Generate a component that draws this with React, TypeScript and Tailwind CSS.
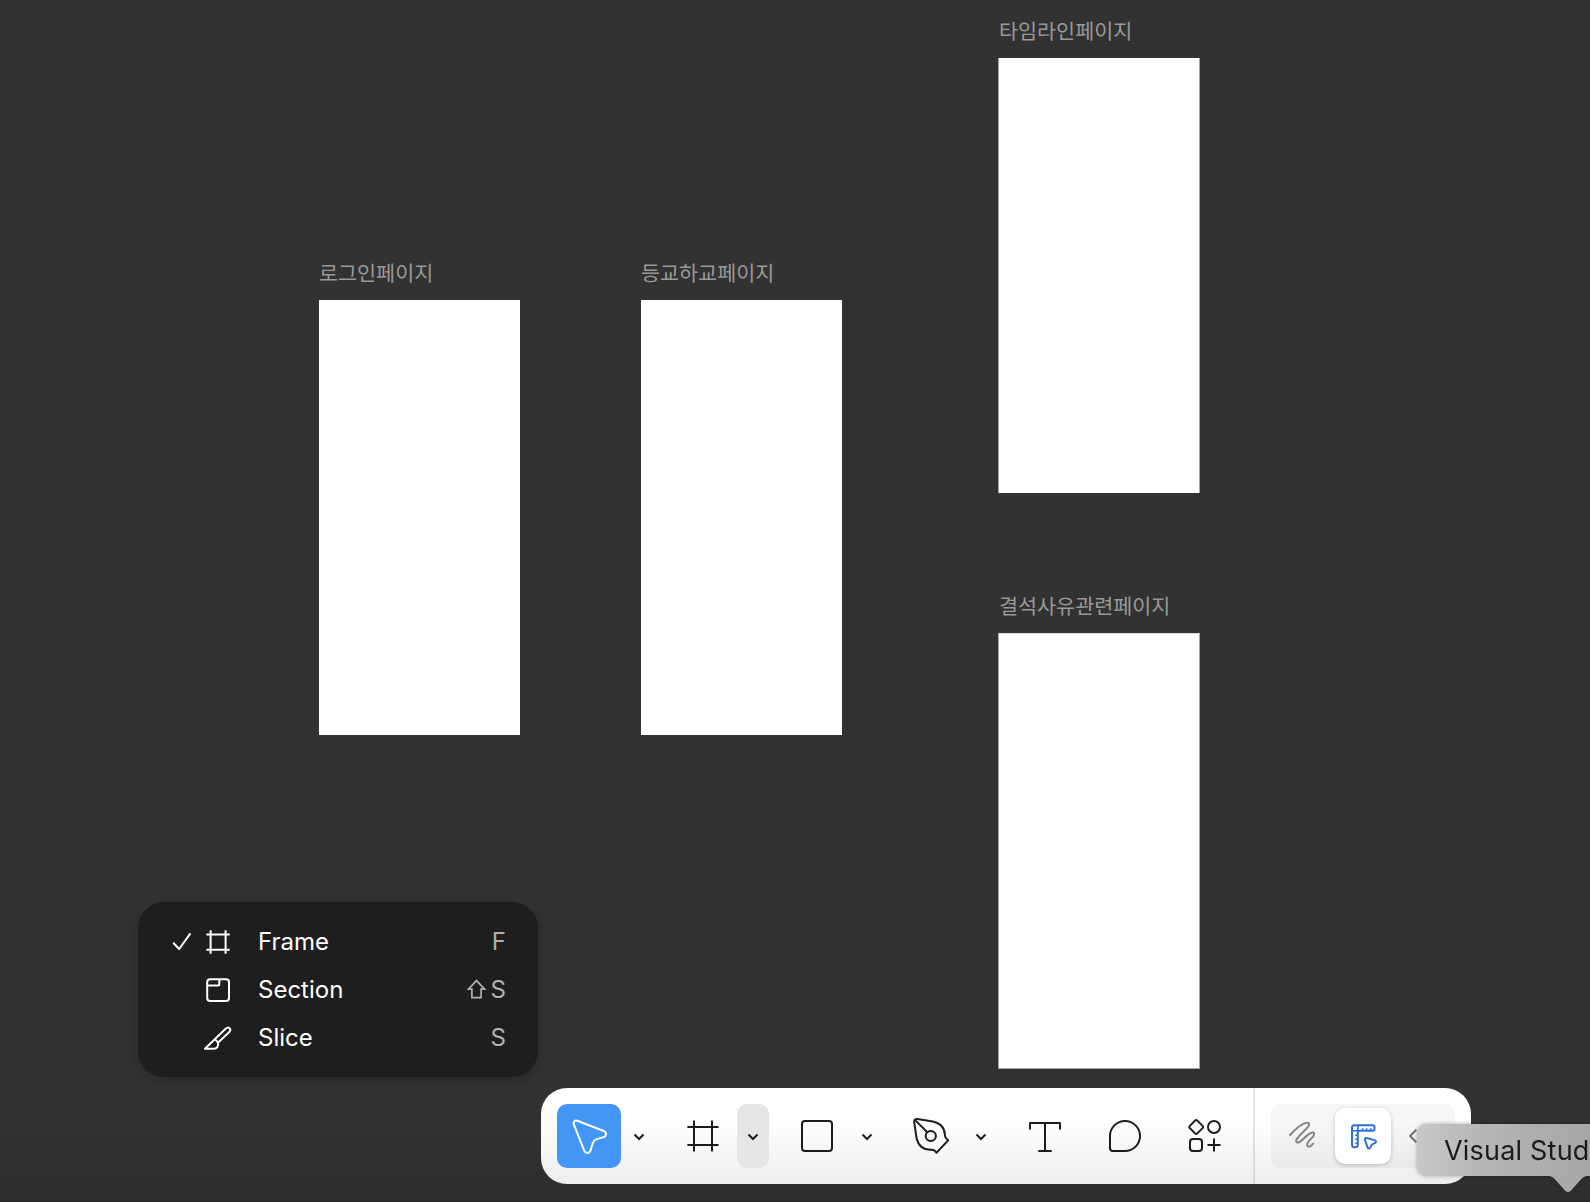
import type { ReactNode } from "react";

const frames = [
  { label: "로그인페이지", place: "left-[319px] top-[258px] w-[201px]", edge: "h-[435px]", inset: "" },
  { label: "등교하교페이지", place: "left-[641px] top-[258px] w-[201px]", edge: "h-[435px]", inset: "" },
  { label: "타임라인페이지", place: "left-[998px] top-[16px] w-[202px]", edge: "h-[435px] border-x border-[#a3a3a3]", inset: "pl-px" },
  { label: "결석사유관련페이지", place: "left-[998px] top-[591px] w-[202px]", edge: "h-[436px] border border-[#a3a3a3] border-t-[#d8d8d8]", inset: "pl-px" },
];

function CanvasFrame({ label, place, edge, inset }: { label: string; place: string; edge: string; inset: string }) {
  return (
    <section className={`absolute flex flex-col ${place}`}>
      <h2
        className={`h-[42px] whitespace-nowrap font-['Noto_Sans_CJK_KR',sans-serif] text-[20.7px] leading-[28px] text-[#999999] ${inset}`}
      >
        {label}
      </h2>
      <div className={`bg-white ${edge}`} />
    </section>
  );
}

function Glyph({ size, className, children }: { size: number; className?: string; children: ReactNode }) {
  return (
    <svg
      width={size}
      height={size}
      viewBox={`0 0 ${size} ${size}`}
      fill="none"
      stroke="currentColor"
      strokeWidth="2"
      strokeLinejoin="round"
      className={`shrink-0 ${className ?? ""}`}
    >
      {children}
    </svg>
  );
}

function Chevron({ active }: { active?: boolean }) {
  return (
    <button className={`ml-0.5 flex h-16 w-8 items-center justify-center rounded-[10px] ${active ? "bg-[#e5e5e5]" : ""}`}>
      <svg width="12" height="8" viewBox="0 0 12 8" fill="none" stroke="#1c1c1c" strokeWidth="2" className="mt-0.5">
        <path d="M1.5 1.5 6 6l4.5-4.5" />
      </svg>
    </button>
  );
}

function MenuRow({ checked, icon, name, keys }: { checked?: boolean; icon: ReactNode; name: string; keys: ReactNode }) {
  return (
    <li className="flex h-12 items-center pl-8 pr-8">
      <span className="w-8">
        {checked && (
          <Glyph size={24}>
            <path d="M3.2 12.8l6 6.2L20.4 3.4" />
          </Glyph>
        )}
      </span>
      {icon}
      <span className="ml-6 grow">{name}</span>
      <span className="flex items-center gap-1 text-[#b0b0b0]">{keys}</span>
    </li>
  );
}

function FrameMenu() {
  return (
    <ul className="absolute left-[138px] top-[902px] w-[400px] rounded-[26px] bg-[#1e1e1e] pb-[15px] pt-4 text-[24px] text-white shadow-[0_4px_14px_rgba(0,0,0,0.2)]">
      <MenuRow
        checked
        name="Frame"
        keys="F"
        icon={
          <Glyph size={32}>
            <path d="M8.6 4.3v23.4M23.6 4.3v23.4M4.3 8.4h23.4M4.3 23.7h23.4" />
          </Glyph>
        }
      />
      <MenuRow
        name="Section"
        keys={
          <>
            <svg width="20" height="20" viewBox="0 0 20 20" fill="none" stroke="currentColor" strokeWidth="1.7" className="-mt-0.5">
              <path d="M9.5 1.6 1.4 10.2h3.5v8.4h9.2v-8.4h3.5Z" />
            </svg>
            S
          </>
        }
        icon={
          <Glyph size={32}>
            <rect x="5.2" y="5.2" width="21.8" height="21.8" rx="3" />
            <path d="M17.3 5.5v4.9a1 1 0 0 1-1 1H5.5" />
          </Glyph>
        }
      />
      <MenuRow
        name="Slice"
        keys="S"
        icon={
          <Glyph size={32}>
            <path d="M3 26.7h8.6c3.6 0 5-2.7 4.4-6L27 10.2c1.5-1.5 1.6-3 .6-4-1-1-2.5-.8-4 .6L3 26.700Z" />
            <path d="M12.6 17.4c1.4.6 2.500 1.700 3.400 3.300" />
          </Glyph>
        }
      />
    </ul>
  );
}

function Toolbar() {
  return (
    <nav className="absolute left-[541px] top-[1088px] flex h-24 overflow-hidden rounded-[26px] bg-linear-to-b from-white from-35% to-[#ededed] text-[#1c1c1c]">
      <div className="flex gap-4 p-4">
        <div className="flex">
          <button className="rounded-[10px] bg-[#4396f3] text-white">
            <Glyph size={64}>
              <path d="M20.3 16.8 46.7 27c3.2 1.3 3 5.3-.1 6.1l-6.8 2c-2.2.6-3.2 1.5-3.9 3.6l-2.4 7.7c-1 3.3-5 3.2-6.2.4L16.8 20.3c-.9-2.3 1.2-4.4 3.5-3.5Z" />
            </Glyph>
          </button>
          <Chevron />
        </div>
        <div className="flex">
          <Glyph size={64}>
            <path d="M23 16.4v31.2M41 16.4v31.2M16.4 23h31.2M16.4 41h31.2" />
          </Glyph>
          <Chevron active />
        </div>
        <div className="flex">
          <Glyph size={64}>
            <rect x="17" y="17" width="30" height="30" rx="3" />
          </Glyph>
          <Chevron />
        </div>
        <div className="flex">
          <Glyph size={64}>
            <path d="M15.2 18.4c-.3-2.2 1.1-3.6 3.3-3.4l15.3 2.4c7 1.2 11.8 6.2 12 12.9.1 2.2.4 3.1 1.2 3.8l2.2 2.3-11.8 12.3-2-2.3c-.8-.7-1.8-.7-3.4-.7-7.9.2-12.7-4.4-14.4-11.5Z" />
            <path d="m16.4 16.4 11.9 11.9" />
            <circle cx="31.8" cy="32" r="5.1" />
          </Glyph>
          <Chevron />
        </div>
        <Glyph size={64}>
          <path d="M17 25.5V19h30v6.5M32 19v28M25.3 47h13.4" />
        </Glyph>
        <Glyph size={64}>
          <path d="M32 17a15 15 0 0 1 0 30H20a3 3 0 0 1-3-3V32a15 15 0 0 1 15-15Z" />
        </Glyph>
        <Glyph size={64}>
          <path d="m22.3 16.4-5.7 5.7a1.3 1.3 0 0 0 0 1.8l5.7 5.7a1.3 1.3 0 0 0 1.8 0l5.7-5.7a1.3 1.3 0 0 0 0-1.8l-5.7-5.7a1.3 1.3 0 0 0-1.8 0Z" />
          <circle cx="41" cy="23" r="6" />
          <rect x="17" y="35" width="12" height="12" rx="3" />
          <path d="M41 34.5v13M34.5 41h13" />
        </Glyph>
      </div>
      <div className="w-0.5 bg-black/10" />
      <div className="p-4">
        <div className="flex h-16 gap-1 rounded-[10px] bg-black/[0.03] p-1">
          <Glyph size={56} className="text-[#858585]">
            <path
              strokeLinecap="round"
              d="M15 27C20 21.6 26.5 16 31.2 14.9c2.9-.6 3.8 1.4 2 3.7C30 22.7 23.2 28 21.5 31.5c-1.2 2.6.8 4 3.3 2.4 4-2.6 7.6-7.9 11.6-9.2 2.8-.9 3.6 1.2 1.9 3.4-2 2.7-5.2 5-6 7.7-.8 2.5 1.1 3.6 3.2 2.3 1.2-.7 2-1.6 2.7-2.4"
            />
          </Glyph>
          <div className="rounded-[10px] bg-white text-[#2f70d8] shadow-[0_1px_4px_rgba(0,0,0,0.22)]">
            <Glyph size={56}>
              <path d="M38 17.2H19.5a2.5 2.5 0 0 0-2.5 2.5v17a2.5 2.5 0 0 0 2.5 2.5h.8a2.5 2.5 0 0 0 2.5-2.5V22.8h14.7a2 2 0 0 0 2-2v-1.9a1.7 1.7 0 0 0-1.5-1.7Z" />
              <path strokeWidth="1.6" d="M22.8 17.2v5.6H17M27.6 22.8v-2.6M31.6 22.8v-2.6M35.6 22.8v-2.6M22.8 27.3h-2.6M22.8 31.3h-2.6M22.8 35.3h-2.6" />
              <path d="m31.6 30 7.900 2.100c1.900.5 2 2.400.4 3.100l-2.300 1c-.7.3-1.1.7-1.400 1.400l-.8 1.900c-.7 1.500-2.400 1.400-2.900-.1l-2.500-7.500c-.4-1.200.4-2.200 1.600-1.900Z" />
            </Glyph>
          </div>
          <Glyph size={56} className="text-[#707070]">
            <path d="M21.3 21.8 15.1 28l6.2 6.2M34.7 21.8l6.2 6.2-6.2 6.2" />
          </Glyph>
        </div>
      </div>
    </nav>
  );
}

function DockTooltip() {
  return (
    <div className="absolute left-[1417px] top-[1124px] w-[173px] drop-shadow-[0_0_2px_rgba(0,0,0,0.3)]">
      <div className="flex h-[52px] items-center rounded-l-[9px] bg-linear-to-r from-[#c8c8c8] via-[#b5b5b5] via-40% to-[#a6a6a6] pl-[27px] pt-0.5">
        <span className="whitespace-nowrap text-[27px] tracking-[0.2px] text-[#1b1b1b]">Visual Stud</span>
      </div>
      <svg width="38" height="16" viewBox="0 0 38 16" className="ml-[132px] block" fill="#a9a9a9">
        <path d="M0 0h38c-3 .4-5 2-7 4.6L22 14.5c-2 2-4 2-6 0L7 4.6C5 2 3 .4 0 0Z" />
      </svg>
    </div>
  );
}

export default function App() {
  return (
    <main className="relative h-[1202px] w-[1590px] overflow-hidden bg-[#323232] font-['Inter',sans-serif]">
      {frames.map((frame) => (
        <CanvasFrame key={frame.label} {...frame} />
      ))}
      <div className="absolute inset-x-0 bottom-0 h-24 border-b border-black/20 bg-linear-to-b from-transparent to-black/10" />
      <FrameMenu />
      <Toolbar />
      <DockTooltip />
    </main>
  );
}
